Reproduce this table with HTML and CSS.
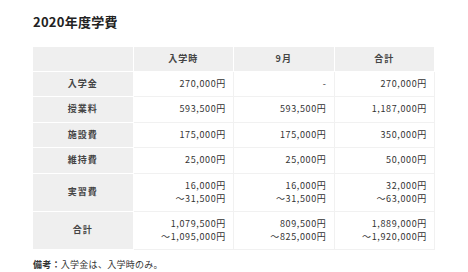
FILE: index.html
```html
<!DOCTYPE html>
<html lang="ja">
<head>
<meta charset="utf-8">
<link rel="stylesheet" href="styles.css">
</head>
<body>
<main class="page">
  <h2 class="title">2020年度学費</h2>
  <table class="fees">
    <thead>
      <tr>
        <th class="corner"></th>
        <th>入学時</th>
        <th>9月</th>
        <th>合計</th>
      </tr>
    </thead>
    <tbody>
      <tr>
        <th>入学金</th>
        <td>270,000円</td>
        <td>-</td>
        <td>270,000円</td>
      </tr>
      <tr>
        <th>授業料</th>
        <td>593,500円</td>
        <td>593,500円</td>
        <td>1,187,000円</td>
      </tr>
      <tr>
        <th>施設費</th>
        <td>175,000円</td>
        <td>175,000円</td>
        <td>350,000円</td>
      </tr>
      <tr>
        <th>維持費</th>
        <td>25,000円</td>
        <td>25,000円</td>
        <td>50,000円</td>
      </tr>
      <tr>
        <th>実習費</th>
        <td>16,000円<br>～31,500円</td>
        <td>16,000円<br>～31,500円</td>
        <td>32,000円<br>～63,000円</td>
      </tr>
      <tr>
        <th>合計</th>
        <td>1,079,500円<br>～1,095,000円</td>
        <td>809,500円<br>～825,000円</td>
        <td>1,889,000円<br>～1,920,000円</td>
      </tr>
    </tbody>
  </table>
  <p class="note"><strong>備考：</strong>入学金は、入学時のみ。</p>
</main>
</body>
</html>
```

FILE: styles.css
```css
html, body {
  margin: 0;
  padding: 0;
  background: #fff;
}

body {
  font-family: "Noto Sans CJK JP", "Noto Sans", sans-serif;
  color: #333;
}

.page {
  padding: 12px 33px 0 33px;
}

.title {
  margin: 0;
  font-size: 13px;
  line-height: 20px;
  font-weight: 700;
  color: #222;
  letter-spacing: 0.02em;
}

.fees {
  margin-top: 15px;
  width: 402px;
  border-collapse: separate;
  border-spacing: 0;
  table-layout: fixed;
  font-size: 9px;
  line-height: 12.6px;
  letter-spacing: 0.07em;
}

.fees th,
.fees td {
  padding: 6px 7px;
  border-right: 1px solid #f1f1f1;
  border-bottom: 1px solid #f1f1f1;
}

.fees th {
  background: #efefef;
  font-weight: 700;
  text-align: center;
  color: #444;
  letter-spacing: 0.12em;
  border-right-color: #fff;
  border-bottom-color: #fff;
}

.fees thead th {
  padding: 5.5px 7px;
}

.fees td {
  text-align: right;
  color: #333;
}

.note {
  margin: 8px 0 0;
  font-size: 9px;
  line-height: 14px;
  letter-spacing: 0.03em;
  color: #333;
}

.note strong {
  font-weight: 700;
}
```
